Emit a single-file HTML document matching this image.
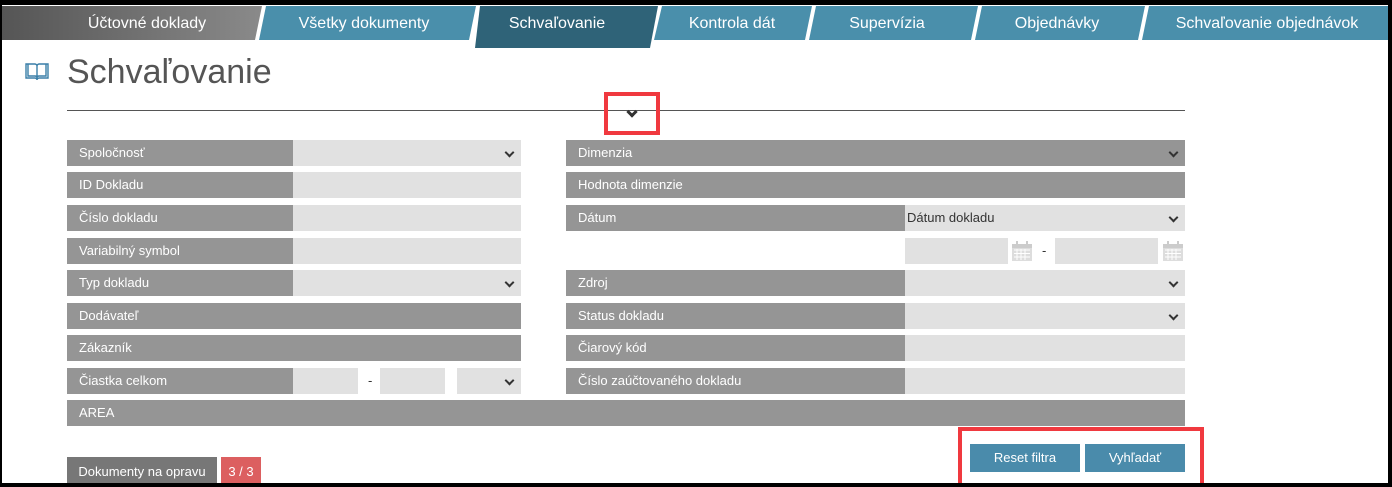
<!DOCTYPE html>
<html><head><meta charset="utf-8"><style>
*{margin:0;padding:0;box-sizing:border-box}
body{width:1392px;height:487px;background:#000;position:relative;overflow:hidden;font-family:"Liberation Sans",sans-serif}
#pg{position:absolute;left:2px;top:5px;width:1386px;height:478px;background:#fff;overflow:hidden}
.tab{position:absolute;top:1px;height:35px;color:#fff;font-size:16px;line-height:35px;text-align:center}
.a{position:absolute;font-size:13px;color:#fff;line-height:26px;padding-left:12px}
.l{background:#959595}
.i{position:absolute;background:#e1e1e1;height:26px}
.chev{position:absolute;right:8px;top:9px;width:7px;height:7px;border-right:2px solid #333;border-bottom:2px solid #333;transform:rotate(45deg)}
.cal{position:absolute;width:22px;height:22px}
.btn{position:absolute;background:#4a8bab;color:#fff;font-size:13px;text-align:center;line-height:28px;height:28px;top:439px}
</style></head><body><div id="pg">
<svg style="position:absolute;left:0;top:0" width="1386" height="50">
<defs><linearGradient id="g" x1="0" x2="1"><stop offset="0" stop-color="#555"/><stop offset="1" stop-color="#8a8a8a"/></linearGradient></defs>
<polygon points="0,1 260,1 253,35 0,35" fill="url(#g)"/>
<polygon points="264,1 474,1 467,35 257,35" fill="#4a8fab"/>
<polygon points="478,1 656,1 648,43 473,43" fill="#2f6378"/>
<polygon points="660,1 810,1 803,35 652,35" fill="#4a8fab"/>
<polygon points="814,1 976,1 969,35 807,35" fill="#4a8fab"/>
<polygon points="980,1 1143,1 1136,35 973,35" fill="#4a8fab"/>
<polygon points="1147,1 1386,1 1386,35 1140,35" fill="#4a8fab"/>
</svg>
<div class="tab" style="left:60px;width:170px;color:#fff">Účtovné doklady</div>
<div class="tab" style="left:262px;width:200px">Všetky dokumenty</div>
<div class="tab" style="left:470px;width:170px">Schvaľovanie</div>
<div class="tab" style="left:650px;width:160px">Kontrola dát</div>
<div class="tab" style="left:805px;width:160px">Supervízia</div>
<div class="tab" style="left:975px;width:160px">Objednávky</div>
<div class="tab" style="left:1145px;width:240px">Schvaľovanie objednávok</div>

<svg style="position:absolute;left:22px;top:56px" width="26" height="20" viewBox="0 0 26 20"><path d="M2 3v14h9c1 0 2 1 2 2c0-1 1-2 2-2h9V3h-9c-1 0-2 1-2 2c0-1-1-2-2-2z M13 5v14 M4 3v12h7c1 0 2 .5 2 1.5 M22 3v12h-7c-1 0-2 .5-2 1.5" fill="none" stroke="#3a7fa8" stroke-width="1.4"/></svg>
<div style="position:absolute;left:65px;top:48px;font-size:34px;color:#555;font-weight:300">Schvaľovanie</div>
<div style="position:absolute;left:65px;top:105px;width:1118px;height:1px;background:#555"></div>
<div style="position:absolute;left:602px;top:87px;width:56px;height:43px;border:4px solid #f0393f"></div>
<div style="position:absolute;left:626px;top:103px;width:8px;height:8px;border-right:3px solid #333;border-bottom:3px solid #333;transform:rotate(45deg)"></div>

<!-- left column -->
<div class="a l" style="left:65px;top:135px;width:226px">Spoločnosť</div><div class="i" style="left:291px;top:135px;width:228px"><i class="chev"></i></div>
<div class="a l" style="left:65px;top:167px;width:226px">ID Dokladu</div><div class="i" style="left:291px;top:167px;width:228px"></div>
<div class="a l" style="left:65px;top:200px;width:226px">Číslo dokladu</div><div class="i" style="left:291px;top:200px;width:228px"></div>
<div class="a l" style="left:65px;top:233px;width:226px">Variabilný symbol</div><div class="i" style="left:291px;top:233px;width:228px"></div>
<div class="a l" style="left:65px;top:265px;width:226px">Typ dokladu</div><div class="i" style="left:291px;top:265px;width:228px"><i class="chev"></i></div>
<div class="a l" style="left:65px;top:298px;width:454px">Dodávateľ</div>
<div class="a l" style="left:65px;top:330px;width:454px">Zákazník</div>
<div class="a l" style="left:65px;top:363px;width:226px">Čiastka celkom</div>
<div class="i" style="left:291px;top:363px;width:65px"></div>
<div style="position:absolute;left:366px;top:368px;font-size:13px;color:#333">-</div>
<div class="i" style="left:378px;top:363px;width:65px"></div>
<div class="i" style="left:455px;top:363px;width:64px"><i class="chev"></i></div>
<div class="a l" style="left:65px;top:395px;width:1118px">AREA</div>

<!-- right column -->
<div class="a l" style="left:564px;top:135px;width:619px">Dimenzia<i class="chev"></i></div>
<div class="a l" style="left:564px;top:167px;width:619px">Hodnota dimenzie</div>
<div class="a l" style="left:564px;top:200px;width:339px">Dátum</div>
<div class="i" style="left:903px;top:200px;width:280px;font-size:13px;line-height:26px;padding-left:2px;color:#333">Dátum dokladu<i class="chev"></i></div>
<div class="i" style="left:903px;top:233px;width:103px"></div>
<svg class="cal" style="left:1009px;top:235px" viewBox="0 0 22 22"><rect x="1" y="4" width="20" height="17" fill="#ddd"/><rect x="1" y="4" width="20" height="4" fill="#ccc"/><rect x="5" y="1" width="2" height="5" fill="#ccc"/><rect x="15" y="1" width="2" height="5" fill="#ccc"/><path d="M3 10h16M3 13.5h16M3 17h16M6 9v11M10 9v11M14 9v11" stroke="#fff" stroke-width="1"/></svg>
<div style="position:absolute;left:1040px;top:238px;font-size:13px;color:#333">-</div>
<div class="i" style="left:1053px;top:233px;width:103px"></div>
<svg class="cal" style="left:1160px;top:235px" viewBox="0 0 22 22"><rect x="1" y="4" width="20" height="17" fill="#ddd"/><rect x="1" y="4" width="20" height="4" fill="#ccc"/><rect x="5" y="1" width="2" height="5" fill="#ccc"/><rect x="15" y="1" width="2" height="5" fill="#ccc"/><path d="M3 10h16M3 13.5h16M3 17h16M6 9v11M10 9v11M14 9v11" stroke="#fff" stroke-width="1"/></svg>
<div class="a l" style="left:564px;top:265px;width:339px">Zdroj</div><div class="i" style="left:903px;top:265px;width:280px"><i class="chev"></i></div>
<div class="a l" style="left:564px;top:298px;width:339px">Status dokladu</div><div class="i" style="left:903px;top:298px;width:280px"><i class="chev"></i></div>
<div class="a l" style="left:564px;top:330px;width:339px">Čiarový kód</div><div class="i" style="left:903px;top:330px;width:280px"></div>
<div class="a l" style="left:564px;top:363px;width:339px">Číslo zaúčtovaného dokladu</div><div class="i" style="left:903px;top:363px;width:280px"></div>

<div style="position:absolute;left:956px;top:422px;width:246px;height:70px;border:4px solid #f0393f"></div>
<div class="btn" style="left:968px;width:110px">Reset filtra</div>
<div class="btn" style="left:1083px;width:100px">Vyhľadať</div>

<div style="position:absolute;left:65px;top:452px;width:150px;height:30px;background:#777;color:#fff;font-size:13px;line-height:30px;text-align:center">Dokumenty na opravu</div>
<div style="position:absolute;left:219px;top:452px;width:40px;height:30px;background:#dc5f60;color:#fff;font-size:13px;line-height:30px;text-align:center">3 / 3</div>
</div></body></html>
